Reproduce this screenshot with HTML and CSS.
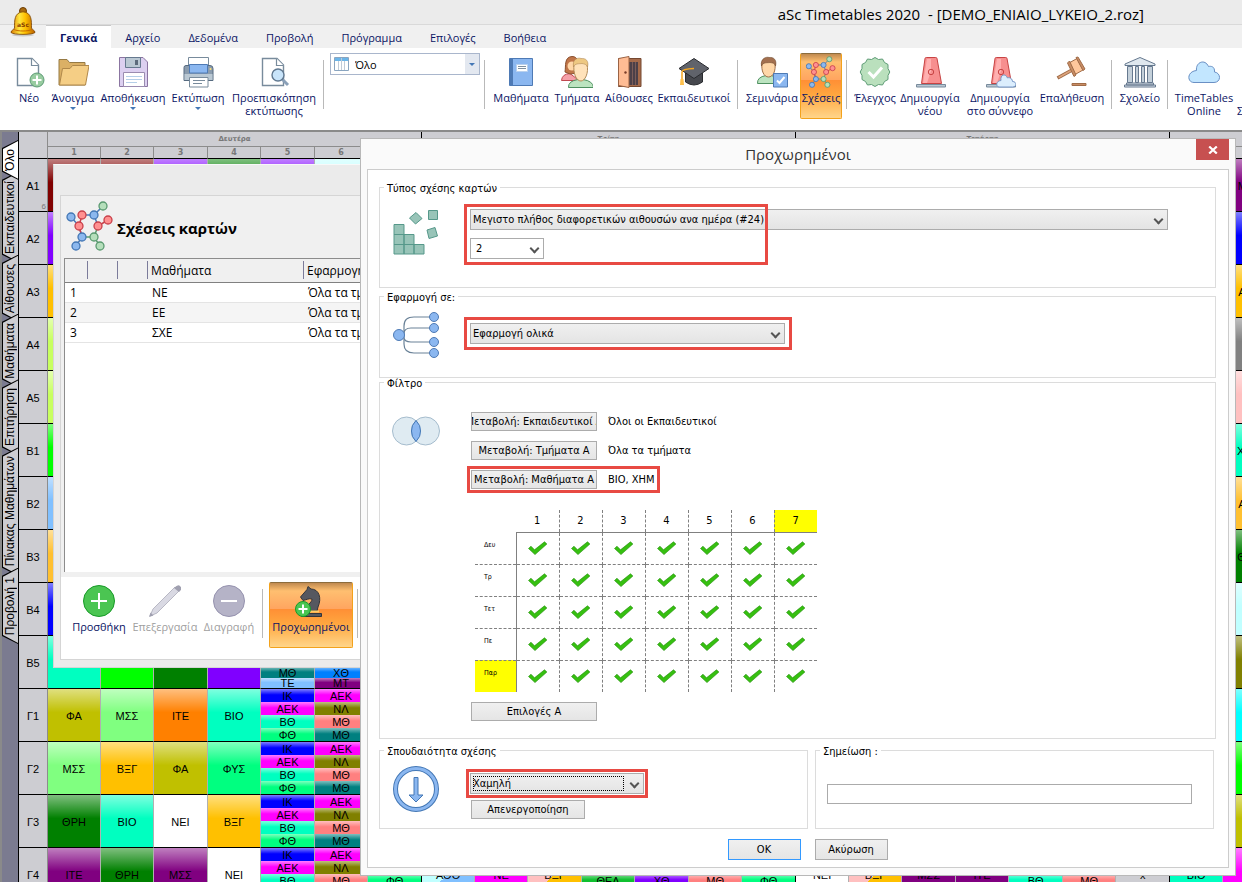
FILE: index.html
```html
<!DOCTYPE html>
<html lang="el">
<head>
    <meta charset="UTF-8">
    <meta name="viewport" content="width=device-width, initial-scale=1.0">
    <title>aSc Timetables 2020</title>
    <link rel="stylesheet" href="styles.css">
</head>
<body>

<!-- shared icons -->
<svg class="defs" width="0" height="0" aria-hidden="true">
    <symbol id="i-molecule" viewBox="0 0 48 50">
        <g fill="none" stroke-width="1.5">
            <path stroke="#4a7ab5" d="M28 14L37 5M16 14H28M5 16L13 25M16 36L10 45M13 25L16 36M28 14L32 25"/>
            <path stroke="#c8404a" d="M16 14L13 25L16 36M32 25L42 19"/>
            <path stroke="#5a9a70" d="M16 36H28L34 45M32 25L28 36"/>
        </g>
        <g fill="#8cb8ee" stroke="#4377b5" stroke-width="1.3"><circle cx="5" cy="16" r="4"/><circle cx="28" cy="14" r="4"/><circle cx="16" cy="36" r="4"/><circle cx="10" cy="45" r="4"/></g>
        <g fill="#ff9090" stroke="#c8404a" stroke-width="1.3"><circle cx="16" cy="14" r="4"/><circle cx="13" cy="25" r="4"/><circle cx="32" cy="25" r="4"/><circle cx="42" cy="19" r="4"/></g>
        <g fill="#b5dfbb" stroke="#5a9a70" stroke-width="1.3"><circle cx="37" cy="5" r="4"/><circle cx="28" cy="36" r="4"/><circle cx="34" cy="45" r="4"/></g>
    </symbol>
    <symbol id="i-page" viewBox="0 0 32 32">
        <path fill="#fff" stroke="#788b9c" stroke-width="1.4" d="M4.500 2.500H19L25.500 9V29.500H4.500Z"/>
        <path fill="#fff" stroke="#788b9c" stroke-width="1.200" d="M18.500 2.500V9.500H25.500"/>
    </symbol>
    <symbol id="i-siren" viewBox="0 0 32 32">
        <path fill="#f78f8f" stroke="#c74343" d="M7.500 27.500L11 2.500C11 1.500 12 1.500 13 1.500H21C22 1.500 23 1.500 23 2.500L27.500 27.500Z"/>
        <path fill="#ffb0b0" d="M13 3H17V15L13 27H9Z"/>
        <circle cx="17" cy="16" r="2.700" fill="none" stroke="#c74343"/>
        <path fill="#bac8d3" stroke="#788b9c" d="M2.500 28.500H31.500V31H2.500Z"/>
    </symbol>
    <symbol id="i-check" viewBox="0 0 20 14">
        <path fill="#36c010" stroke="#208a08" stroke-width=".6" d="M.5 7.500L3 5.200L6.500 8.800L16.500 .8L18.900 3L7 13.600Z"/>
    </symbol>
</svg>

<div class="app">
    <header class="titlebar">
        <svg class="logo" viewBox="0 0 26 30" aria-hidden="true">
            <defs>
                <linearGradient id="gold"><stop offset="0" stop-color="#d97a00"/><stop offset=".35" stop-color="#ffe640"/><stop offset=".6" stop-color="#ffc000"/><stop offset="1" stop-color="#b85c00"/></linearGradient>
            </defs>
            <ellipse cx="13" cy="28" rx="11" ry="1.500" fill="#c9c9c9"/>
            <circle cx="13" cy="4" r="3.500" fill="#a86a10" stroke="#6b3b00"/>
            <path fill="url(#gold)" stroke="#7a4300" stroke-width=".8" d="M4.500 21C4.500 14 4 5.500 13 4.800C22 5.500 21.500 14 21.500 21C22 23 25 23 25 25.500C23 28 3 28 1 25.500C1 23 4 23 4.500 21Z"/>
            <path fill="none" stroke="#c86b00" d="M4 22.500C8 24.500 18 24.500 22 22.500"/>
            <text x="13" y="20" text-anchor="middle" class="logo-text">aSc</text>
        </svg>
        <h1>aSc Timetables 2020 &nbsp;- [DEMO_ENIAIO_LYKEIO_2.roz]</h1>
    </header>

    <nav class="menu">
        <a href="#" class="active">Γενικά</a>
        <a href="#">Αρχείο</a>
        <a href="#">Δεδομένα</a>
        <a href="#">Προβολή</a>
        <a href="#">Πρόγραμμα</a>
        <a href="#">Επιλογές</a>
        <a href="#">Βοήθεια</a>
    </nav>

    <div class="ribbon">
        <div class="group group-file">
            <button class="tool">
                <svg viewBox="0 0 32 32"><use href="#i-page"/><circle cx="24" cy="24" r="7" fill="#98ccA0" stroke="#5e9c76"/><path stroke="#fff" stroke-width="2" d="M24 19.500V28.500M19.500 24H28.500"/></svg>
                <span>Νέο</span>
            </button>
            <button class="tool drop">
                <svg viewBox="0 0 32 32"><path fill="#dbb065" stroke="#967a44" d="M2 29V3.500H10L12.500 6.500H28V29Z"/><path fill="#f5ce85" stroke="#b0884a" d="M2.500 29L5.500 12.500H13L15.500 9.500H32L28.500 29Z"/></svg>
                <span>Άνοιγμα</span>
            </button>
            <button class="tool drop">
                <svg viewBox="0 0 32 32"><path fill="#dcd0f0" stroke="#8b75a1" d="M2.500 1.500H26L30.500 6V30.500H2.500Z"/><path fill="#bac8d3" stroke="#66798f" d="M8.500 1.500H23.500V11.500H8.500Z"/><path fill="#5c6b7b" d="M18 4H21V9H18Z"/><path fill="#fff" stroke="#9a8cb0" d="M6.500 16.500H27.500V30.500H6.500Z"/><path stroke="#b5cfe8" d="M9 20.500H25M9 23.500H25M9 26.500H20"/></svg>
                <span>Αποθήκευση</span>
            </button>
            <button class="tool drop">
                <svg viewBox="0 0 32 32"><path fill="#fff" stroke="#788b9c" d="M6.500 1.500H26.500V10H6.500Z"/><path fill="#8b9cae" stroke="#566b80" d="M2 11.500Q2 9.500 4 9.500H28Q31 9.500 31 12.500V24.500H2Z"/><path fill="#bac8d3" d="M2.500 18H30.500V24H2.500Z"/><path fill="#8bb7f0" stroke="#4e7ab5" d="M7.500 8.500H25.500V17H7.500Z"/><path fill="#fff" stroke="#788b9c" d="M7.500 21.500H26V31H7.500Z"/><path stroke="#788b9c" d="M11 24.500H23M11 27.500H20"/><circle cx="28.500" cy="13" r="1" fill="#ffe070"/></svg>
                <span>Εκτύπωση</span>
            </button>
            <button class="tool">
                <svg viewBox="0 0 32 32"><use href="#i-page"/><path stroke="#8aa0b8" stroke-width="3" d="M24 23L30 29"/><circle cx="20" cy="19" r="6" fill="#c8e4fa" stroke="#607890" stroke-width="1.400"/></svg>
                <span>Προεπισκόπηση<br>εκτύπωσης</span>
            </button>
        </div>
        <i class="sep"></i>
        <label class="view-combo">
            <svg viewBox="0 0 15 14" aria-hidden="true"><path fill="#fff" stroke="#8aa5c0" d="M.5.5H14.500V13.500H.5Z"/><path fill="#6bb5e8" d="M1 1H14V4H1Z"/><path stroke="#c0cbd8" d="M4.500 4V13M7.500 1V13M10.500 4V13"/></svg>
            <select aria-label="Προβολή"><option>Όλο</option></select>
        </label>
        <i class="sep near"></i>
        <div class="group group-data">
            <button class="tool">
                <svg viewBox="0 0 32 32"><path fill="#8bb7f0" stroke="#4e7ab5" d="M4.500 2.500H27.500V29.500H4.500Z"/><path fill="#4e7ab5" d="M5 3H8V29H5Z"/><path fill="#fff" stroke="#b8d0ee" d="M11.500 8.500H22.500V15.500H11.500Z"/><path stroke="#8090a0" d="M13 10.500H21M13 12.500H21"/></svg>
                <span>Μαθήματα</span>
            </button>
            <button class="tool">
                <svg viewBox="0 0 32 32"><path fill="#f5a0a8" stroke="#c04850" d="M.5 24.500Q1 18 9 17.500L18 24.500Z"/><path fill="#c07548" stroke="#8a5030" d="M4 16C5 10 3 1 11 .5C17 .5 18 6 17 17L9 18Z"/><circle cx="11" cy="10" r="4.500" fill="#ffd7a8"/><path fill="#bce4c0" stroke="#4e9060" d="M7.500 31.500Q7 25 17 23.500H22Q32 25 32.500 31.500Z"/><path fill="#ffe2ba" stroke="#b28a58" d="M13 8C13 3 25 2 26 8C28 17 24 25 20 25C15 25 12 17 13 8Z"/><path fill="#eec882" stroke="#b28a58" stroke-width=".6" d="M12.500 11C11 2 18 1.500 20 2.500C25 2 28 5 26.500 11C25.500 8 23 8 21 7.500C18 8 14 7 12.500 11Z"/></svg>
                <span>Τμήματα</span>
            </button>
            <button class="tool">
                <svg viewBox="0 0 32 32"><path fill="#a56a4a" stroke="#754830" d="M5.500 2.500H28V30.500H5.500Z"/><path fill="#4c4048" d="M16 6H25V29H16Z"/><path fill="#7a5c58" d="M19 6H20V29H19ZM22 6H23V29H22Z"/><path fill="#ffbc94" stroke="#9a6345" d="M5.500 2.500L16 .5V31.500L5.500 29.500Z"/><circle cx="12.500" cy="16.500" r="1.200" fill="#7a3c28"/></svg>
                <span>Αίθουσες</span>
            </button>
            <button class="tool">
                <svg viewBox="0 0 32 32"><path fill="#46484e" stroke="#2a2c30" d="M7.500 17V26Q16 32 24.500 26V17Z"/><path fill="#60636b" stroke="#2a2c30" d="M16 2.500L31 12.500L16 22.500L1 12.500Z"/><path fill="none" stroke="#f5a623" stroke-width="1.500" d="M16 12.500Q4 13 4 16V24"/><path fill="#ffc14d" d="M2.500 23H5.500L6 29H2Z"/></svg>
                <span>Εκπαιδευτικοί</span>
            </button>
        </div>
        <i class="sep"></i>
        <div class="group group-rel">
            <button class="tool">
                <svg viewBox="0 0 32 32"><path fill="#bce4c0" stroke="#4e9060" d="M1.500 27.500Q1 21 10 19.500H15Q24 21 24.500 27.500Z"/><path fill="#ffd7a8" stroke="#a07048" d="M6 7C6 3 18 3 19 7C20 15 17 21 12.500 21C8 21 5 15 6 7Z"/><path fill="#a3704f" stroke="#70492e" stroke-width=".6" d="M5.500 10C4 2 11 .5 13 1.500C18 1 21 4 19.500 10C18.500 6.500 16 7 14 6.500C11 7 7 6 5.500 10Z"/><path fill="#8bb7f0" stroke="#4e7ab5" d="M17.500 17.500H31.500V31H17.500Z"/><path fill="none" stroke="#fff" stroke-width="2" d="M21 24.500L23.500 27L28.500 21"/></svg>
                <span>Σεμινάρια</span>
            </button>
            <button class="tool selected">
                <svg viewBox="0 0 48 50"><use href="#i-molecule"/></svg>
                <span>Σχέσεις</span>
            </button>
        </div>
        <i class="sep near"></i>
        <div class="group group-check">
            <button class="tool">
                <svg viewBox="0 0 32 32"><path fill="#bae0bd" stroke="#5e9c76" d="M16 1.500L19.500 3.500L23.500 3L25.500 6.500L29 8.500L29 12.500L30.800 16L29 19.500V23.500L25.500 25.500L23.500 29L19.500 28.500L16 30.500L12.500 28.500L8.500 29L6.500 25.500L3 23.500V19.500L1.200 16L3 12.500V8.500L6.500 6.500L8.500 3L12.500 3.500Z"/><path fill="none" stroke="#fff" stroke-width="3" d="M9.500 16L14.500 21L23 11.500"/></svg>
                <span>Έλεγχος</span>
            </button>
            <button class="tool">
                <svg viewBox="0 0 32 32"><use href="#i-siren"/></svg>
                <span>Δημιουργία<br>νέου</span>
            </button>
            <button class="tool">
                <svg viewBox="0 0 32 32"><use href="#i-siren"/><path fill="#dceefd" stroke="#7898c8" d="M15 31H28.500C33 31 33 25.500 28.500 25.500C28 21 24 21.500 23.500 22C21 16.500 16 19 17 24.500C11.500 25 12 31 15 31Z"/></svg>
                <span>Δημιουργία<br>στο σύννεφο</span>
            </button>
            <button class="tool">
                <svg viewBox="0 0 32 32"><path stroke="#a06c48" stroke-width="3.600" d="M1.500 22L17 13.500"/><path stroke="#dda47c" stroke-width="1.600" d="M2.500 21.500L17 13.500"/><path fill="#ffc79c" stroke="#a06c48" d="M13 7L21 2.500L27 14L19 18.500Z"/><path fill="#c98c64" stroke="#a06c48" d="M11.500 7L13.500 5L20 19L18 20.500ZM20 1.500L22 1L29 13L27 14.500Z"/><path fill="#c98c64" stroke="#a06c48" d="M16 27.500H30V29.500H16Z"/></svg>
                <span>Επαλήθευση</span>
            </button>
        </div>
        <i class="sep"></i>
        <div class="group group-school">
            <button class="tool">
                <svg viewBox="0 0 32 32"><path fill="#dfe8ef" stroke="#66798f" d="M1 9.500V8L16 1.500L31 8V9.500Z"/><path fill="#c4d0da" stroke="#66798f" d="M3.500 10.500H8.500V26.500H3.500ZM11.500 10.500H14.500V26.500H11.500ZM17.500 10.500H20.500V26.500H17.500ZM23.500 10.500H28.500V26.500H23.500Z"/><path fill="#dfe8ef" stroke="#66798f" d="M2.500 27H29.500V29H2.500ZM.5 29H31.500V31H.5Z"/></svg>
                <span>Σχολείο</span>
            </button>
        </div>
        <i class="sep"></i>
        <div class="group group-online">
            <button class="tool">
                <svg viewBox="0 0 32 32"><path fill="#c2e6ff" stroke="#6a90c4" d="M6 26.500H26C33 26.500 33.500 17 26.500 16C27 10 22.500 10 20.500 10.500C17 2.500 7.500 6 8.500 14.500C-1.500 15.500-1 26.500 6 26.500Z"/></svg>
                <span>TimeTables<br>Online</span>
            </button>
            <button class="tool cut"><span><br>Σ</span></button>
        </div>
    </div>

    <main class="workspace">
        <div class="side-tabs">
            <button class="active"><span>Όλο</span></button>
            <button><span>Εκπαιδευτικοί</span></button>
            <button><span>Αίθουσες</span></button>
            <button><span>Μαθήματα</span></button>
            <button><span>Επιτήρηση</span></button>
            <button><span>Πίνακας Μαθημάτων</span></button>
            <button><span>Προβολή 1</span></button>
        </div>
        <div class="sheet">
            <table class="timetable" id="timetable"></table>
        </div>
    </main>

    <!-- card relations window -->
    <section class="window relations">
        <div class="relations-panel">
            <div class="relations-head">
                <svg viewBox="0 0 48 50"><use href="#i-molecule"/></svg>
                <h2>Σχέσεις καρτών</h2>
            </div>
            <div class="list">
                <table>
                    <colgroup><col class="c-num"><col class="c-flag"><col class="c-flag"><col class="c-subject"><col></colgroup>
                    <thead>
                        <tr><th></th><th></th><th></th><th>Μαθήματα</th><th>Εφαρμογή</th></tr>
                    </thead>
                    <tbody>
                        <tr><td>1</td><td></td><td></td><td>ΝΕ</td><td>Όλα τα τμήματα</td></tr>
                        <tr><td>2</td><td></td><td></td><td>ΕΕ</td><td>Όλα τα τμήματα</td></tr>
                        <tr><td>3</td><td></td><td></td><td>ΣΧΕ</td><td>Όλα τα τμήματα</td></tr>
                    </tbody>
                </table>
            </div>
            <div class="relations-tools">
                <div class="group group-edit">
                    <button class="tool">
                        <svg viewBox="0 0 32 32"><circle cx="16" cy="16" r="15.500" fill="#4bc552" stroke="#189a28"/><path stroke="#fff" stroke-width="2" d="M16 8V24M8 16H24"/></svg>
                        <span>Προσθήκη</span>
                    </button>
                    <button class="tool" disabled>
                        <svg viewBox="0 0 32 32"><path fill="#d9d9e3" stroke="#b8b8c4" d="M1 31L4 24L26 2L30 6L8 28Z"/><path fill="#a0a0b0" d="M0 32L1.500 27.500L4.500 30.500ZM25 3Q29-1 31 1Q34 4 30 7Z"/></svg>
                        <span>Επεξεργασία</span>
                    </button>
                    <button class="tool" disabled>
                        <svg viewBox="0 0 32 32"><circle cx="16" cy="16" r="15.500" fill="#b5b3c7" stroke="#9592ae"/><path stroke="#fff" stroke-width="2" d="M8 16H24"/></svg>
                        <span>Διαγραφή</span>
                    </button>
                </div>
                <i class="sep"></i>
                <button class="tool selected wide">
                    <svg viewBox="0 0 32 32"><path fill="#565860" stroke="#33353a" d="M10 26C11 20 17 18 17 14C14 13 11 15 8 15.500L5.500 12L12 4.500L13 1.500L16 4C24 4 27 13 23 22L22 26Z"/><path fill="#565860" stroke="#33353a" d="M6.500 28.500H26.500V31.500H6.500Z"/><path stroke="#ffcc66" stroke-width="2" d="M9 26.500H24"/><circle cx="8" cy="24" r="7.500" fill="#4bc552" stroke="#189a28"/><path stroke="#fff" stroke-width="2" d="M8 19.500V28.500M3.500 24H12.500"/></svg>
                    <span>Προχωρημένοι</span>
                </button>
                <i class="sep near"></i>
            </div>
        </div>
    </section>

    <!-- advanced dialog -->
    <section class="window dialog">
        <div class="dialog-title">
            <h2>Προχωρημένοι</h2>
            <button class="close" aria-label="Κλείσιμο"><svg viewBox="0 0 10 8"><path stroke="#fff" stroke-width="2.200" d="M1.200.5L8.800 7.500M8.800.5L1.200 7.500"/></svg></button>
        </div>
        <form class="dialog-body">
            <fieldset class="f-type">
                <legend>Τύπος σχέσης καρτών</legend>
                <svg class="icon" viewBox="0 0 46 46"><g fill="#98c4b8" stroke="#56988a"><path d="M1 15.500H11V45H1ZM11 25.500H21V45H11ZM21 35.500H31V45H21Z"/><path fill="none" d="M1 25.500H11M1 35.500H21"/><path d="M35.500 1.500H44.500V10.500H35.500ZM23 3.500L29 9.500L22.500 15L16.500 9ZM34 21L42 18.500L44.500 27L36 29.500Z"/></g></svg>
                <div class="controls">
                    <span class="select"><select aria-label="Τύπος σχέσης"><option>Μεγιστο πλήθος διαφορετικών αιθουσών ανα ημέρα (#24)</option></select></span>
                    <span class="select plain"><select aria-label="Πλήθος"><option>2</option></select></span>
                    <i class="mark mark-type"></i>
                </div>
            </fieldset>

            <fieldset class="f-apply">
                <legend>Εφαρμογή σε:</legend>
                <svg class="icon" viewBox="0 0 46 46"><g fill="none" stroke="#6a8298" stroke-width="1.200"><path d="M41 5H21Q11 5 11 14V32Q11 41 21 41H41M41 16H18Q11 16 11 22M41 30H18Q11 30 11 25"/></g><g fill="#8bb7f0" stroke="#4e7ab5"><circle cx="6" cy="23" r="5.500"/><circle cx="41" cy="5" r="4.500"/><circle cx="41" cy="16" r="4.500"/><circle cx="41" cy="30" r="4.500"/><circle cx="41" cy="41" r="4.500"/></g></svg>
                <div class="controls">
                    <span class="select medium"><select aria-label="Εφαρμογή σε"><option>Εφαρμογή ολικά</option></select></span>
                    <i class="mark mark-box"></i>
                </div>
            </fieldset>

            <fieldset class="f-filter">
                <legend>Φίλτρο</legend>
                <svg class="icon venn" viewBox="0 0 48 30"><circle cx="14.500" cy="15" r="14" fill="#dfebf2" stroke="#a5bccd"/><circle cx="33.500" cy="15" r="14" fill="#dfebf2" stroke="#a5bccd"/><path fill="#8bb7f0" stroke="#4377b5" d="M24 4.500Q29 9.500 28.500 15Q29 20.500 24 25.500Q19 20.500 19.500 15Q19 9.500 24 4.500Z"/></svg>
                <div class="controls">
                    <div class="pick"><button type="button" class="btn"><span>Μεταβολή: Εκπαιδευτικοί Α</span></button><span>Όλοι οι Εκπαιδευτικοί</span></div>
                    <div class="pick"><button type="button" class="btn"><span>Μεταβολή: Τμήματα Α</span></button><span>Όλα τα τμήματα</span></div>
                    <div class="pick"><button type="button" class="btn"><span>Μεταβολή: Μαθήματα Α</span></button><span>ΒΙΟ, ΧΗΜ</span><i class="mark mark-pick"></i></div>
                    <table class="periods" id="periods"></table>
                    <button type="button" class="btn"><span>Επιλογές Α</span></button>
                </div>
            </fieldset>

            <div class="pair">
                <fieldset class="f-weight">
                    <legend>Σπουδαιότητα σχέσης</legend>
                    <svg class="icon" viewBox="0 0 46 46"><circle cx="23" cy="23" r="20.500" fill="none" stroke="#4377b5" stroke-width="5"/><circle cx="23" cy="23" r="20.500" fill="none" stroke="#8bb7f0" stroke-width="3"/><path fill="#8bb7f0" stroke="#4377b5" d="M21 11.500H25V29H30L23 36L16 29H21Z"/></svg>
                    <div class="controls">
                        <span class="select small focused"><select aria-label="Σπουδαιότητα"><option>Χαμηλή</option></select></span>
                        <i class="mark mark-weight"></i>
                        <button type="button" class="btn off"><span>Απενεργοποίηση</span></button>
                    </div>
                </fieldset>
                <fieldset class="f-note">
                    <legend><label for="note">Σημείωση :</label></legend>
                    <input type="text" id="note">
                </fieldset>
            </div>

            <div class="actions">
                <button type="button" class="btn ok"><span>OK</span></button>
                <button type="button" class="btn"><span>Ακύρωση</span></button>
            </div>
        </form>
    </section>
</div>

<script src="script.js"></script>
</body>
</html>
```
FILE: styles.css
```css
* {
    box-sizing: border-box;
}

body {
    margin: 0;
    font-family: 'Open Sans', 'Noto Sans', sans-serif;
    font-size: 12px;
    color: #000;
    background: #c9c9cf;
}

button,
select,
input {
    font: inherit;
    color: inherit;
    margin: 0;
}

h1,
h2 {
    margin: 0;
    font-weight: normal;
}

.defs {
    position: absolute;
}

.app {
    position: relative;
    display: flex;
    flex-direction: column;
    height: 100vh;
    overflow: hidden;
}

/* title and menu */
.titlebar {
    position: relative;
    height: 25px;
    padding-right: 98px;
    background: #ebebeb;
    border-bottom: 1px solid #d9d9d9;
    text-align: right;
}

.titlebar h1 {
    font-size: 15px;
    line-height: 29px;
    height: 24px;
    white-space: nowrap;
}

.logo {
    position: absolute;
    left: 10px;
    top: 7px;
    width: 26px;
    height: 30px;
    z-index: 2;
}

.logo-text {
    font: bold 6px 'DejaVu Sans', sans-serif;
    fill: #8a3d00;
}

.menu {
    display: flex;
    height: 23px;
    padding-left: 46px;
    background: #f0f0f0;
    font-size: 11px;
}

.menu a {
    padding: 0 14px;
    line-height: 26px;
    height: 23px;
    color: #0a1464;
    text-decoration: none;
}

.menu a.active {
    background: #fff;
    border-top: 1px solid #c8c8c8;
    line-height: 24px;
    font-weight: bold;
}

/* ribbon */
.ribbon {
    display: flex;
    height: 82px;
    padding: 5px 0 0 12px;
    background: #fff;
    overflow: hidden;
}

.group {
    display: grid;
    flex: none;
    align-items: start;
}

.group-file { grid-template-columns: 34px 54px 66px 64px 88px; }
.group-data { grid-template-columns: 62px 50px 54px 76px; }
.group-rel { grid-template-columns: 56px 42px; }
.group-check { grid-template-columns: 46px 64px 76px 68px; }
.group-school { grid-template-columns: 44px; }
.group-online { grid-template-columns: 60px 20px; }
.group-edit { grid-template-columns: 66px 66px 62px; }

.tool {
    position: relative;
    display: flex;
    flex-direction: column;
    align-items: center;
    gap: 3px;
    height: 66px;
    padding: 3px 0 0;
    border: 0;
    background: none;
    color: #0a1464;
    font-size: 11px;
    line-height: 13px;
    white-space: nowrap;
}

.tool svg {
    flex: none;
    width: 32px;
    height: 32px;
}

.tool.drop::after {
    content: '';
    border: 3px solid transparent;
    border-top-color: #4377b5;
    border-bottom: 0;
}

.tool.cut {
    align-items: flex-start;
    padding: 38px 0 0 3px;
}

.tool:disabled {
    color: #a0a0a0;
}

.tool.selected {
    border: 1px solid #f3a21c;
    border-top-color: #8c6c3c;
    border-radius: 2px;
    padding-top: 2px;
    background: linear-gradient(#c08a50, #ffbf70 8px, #ffa560 40%, #ff8f35 41%, #ffa840 65%, #ffd58a);
}

.tool.wide {
    width: 84px;
}

.sep {
    flex: none;
    width: 1px;
    height: 49px;
    margin: 7px 6px 0 5px;
    background: #b9b9b9;
}

.sep.near {
    margin: 7px 5px 0 4px;
}

.view-combo {
    position: relative;
    display: flex;
    align-items: center;
    flex: none;
    width: 150px;
    height: 22px;
    border: 1px solid #a9b6cc;
    background: linear-gradient(to left, #e3e8f0 14px, #fff 14px);
    font-size: 11px;
}

.view-combo svg {
    position: absolute;
    left: 3px;
    width: 15px;
    height: 14px;
}

.view-combo select {
    flex: 1;
    height: 20px;
    padding: 0 24px;
    border: 0;
    background: none;
    appearance: none;
}

.view-combo::after {
    content: '';
    position: absolute;
    right: 4px;
    border: 3px solid transparent;
    border-top-color: #4377b5;
    border-bottom: 0;
}

/* timetable behind the windows */
.workspace {
    display: flex;
    flex: 1;
    min-height: 0;
    border-top: 2px solid #8a8a8a;
    border-left: 2px solid #8a8a8a;
    background: #7b7b90;
}

.side-tabs {
    display: flex;
    flex-direction: column;
    flex: none;
    width: 17px;
    padding-top: 8px;
    border-right: 1px solid #000;
    font: 12px 'Liberation Sans', sans-serif;
}

.side-tabs button {
    position: relative;
    flex: none;
    width: 16px;
    padding: 9px 0;
    margin-bottom: -8px;
    border: 0;
    background: #000;
    clip-path: polygon(0 8px, 100% 0, 100% 100%, 0 calc(100% - 8px));
    writing-mode: vertical-rl;
    line-height: 16px;
    white-space: nowrap;
}

.side-tabs button::before {
    content: '';
    position: absolute;
    inset: 1px 0 1px 1px;
    background: #cdcdd2;
    clip-path: polygon(0 8px, 100% 0, 100% 100%, 0 calc(100% - 8px));
}

.side-tabs button.active {
    z-index: 1;
}

.side-tabs button.active::before {
    background: #fff;
}

.side-tabs span {
    position: relative;
    display: block;
    transform: rotate(180deg);
}

.sheet {
    flex: 1;
    min-width: 0;
    overflow: hidden;
}

.timetable {
    width: 100%;
    table-layout: fixed;
    border-spacing: 0;
    font: 11px 'Liberation Sans', sans-serif;
    text-align: center;
}

.timetable th,
.timetable td {
    padding: 0;
    font-weight: normal;
    overflow: hidden;
}

.timetable .days th {
    height: 15px;
    border-bottom: 1px solid #8c8c8c;
    border-right: 1px solid #000;
    background: #cdcdd2;
    font: bold 7px/14px 'DejaVu Sans', sans-serif;
    color: #777;
}

.timetable .numbers th {
    height: 12px;
    border-bottom: 1px solid #000;
    border-right: 1px solid #8c8c8c;
    background: #cdcdd2;
    font: bold 8px/11px 'DejaVu Sans', sans-serif;
    color: #777;
}

.timetable tbody th {
    position: relative;
    height: 53px;
    padding-top: 2px;
    border-right: 1px solid #8c8c8c;
    border-bottom: 1px solid #000;
    background: #cdcdd2;
}

.timetable th.corner {
    border-right: 1px solid #8c8c8c;
    border-bottom: 1px solid #000;
    background: #cdcdd2;
}

.timetable small {
    position: absolute;
    right: 1px;
    bottom: 0;
    font-size: 8px;
    color: #777;
}

.timetable td {
    height: 53px;
    border-right: 1px solid #b0b0b0;
    border-bottom: 1px solid #000;
}

.timetable .day-end {
    border-right-color: #000;
}

.cards {
    display: flex;
    flex-direction: column;
    height: 52px;
}

.card {
    flex: 1 1 0;
    min-height: 0;
    display: flex;
    align-items: center;
    justify-content: center;
    overflow: hidden;
    padding-top: 1px;
    line-height: 10px;
    background-image: linear-gradient(rgba(255, 255, 255, .5), rgba(255, 255, 255, 0) 45%);
}

/* windows */
.window {
    position: absolute;
}

.relations {
    left: 53px;
    top: 164px;
    width: 740px;
    padding: 30px 6px 7px;
    background: #ebebeb;
    border: 1px solid #d5d5d5;
    border-top-color: #f8f8f8;
}

.relations-panel {
    border: 1px solid #d5d5d5;
    background: #f0f0f0;
}

.relations-head {
    display: flex;
    align-items: center;
    gap: 3px;
    height: 62px;
    padding: 0 0 2px 5px;
}

.relations-head svg {
    width: 48px;
    height: 50px;
}

.relations-head h2 {
    font-size: 15px;
    font-weight: bold;
    line-height: 24px;
    padding-top: 4px;
}

.list {
    height: 314px;
    margin-left: 3px;
    border: 1px solid #8c8c8c;
    border-bottom: 0;
    background: #fff;
}

.list table {
    width: 100%;
    table-layout: fixed;
    border-spacing: 0;
}

.c-num { width: 22px; }
.c-flag { width: 30px; }
.c-subject { width: 156px; }

.list th {
    position: relative;
    height: 24px;
    padding: 0 0 0 4px;
    background: #f0f0f0;
    border-bottom: 1px solid #808080;
    text-align: left;
    font-weight: normal;
}

.list th + th::before {
    content: '';
    position: absolute;
    left: 0;
    top: 2px;
    width: 1px;
    height: 18px;
    background: #7b7b9a;
}

.list td {
    height: 20px;
    padding: 0 0 0 5px;
    border-bottom: 1px solid #e4e4e4;
    line-height: 18px;
}

.list tr:nth-child(even) td {
    background: #f5f5f5;
}

.relations-tools {
    display: flex;
    height: 82px;
    margin-top: 5px;
    padding: 5px 0 0 5px;
    background: #fff;
}

.relations-tools .sep {
    margin-left: 2px;
}

.relations-tools .sep.near {
    margin-left: 4px;
}

/* dialog */
.dialog {
    left: 360px;
    right: 6px;
    top: 138px;
    padding: 0 6px 7px;
    border: 1px solid #b8b8b8;
    background: #fafafa;
    font: 11px 'DejaVu Sans Condensed', 'DejaVu Sans', sans-serif;
    font-stretch: condensed;
}

.dialog-title {
    position: relative;
    height: 30px;
    text-align: center;
}

.dialog-title h2 {
    font: 15px/31px 'Open Sans', sans-serif;
    color: #333;
}

.close {
    position: absolute;
    right: 0;
    top: 0;
    display: flex;
    align-items: center;
    justify-content: center;
    width: 33px;
    height: 21px;
    border: 0;
    background: #c75050;
}

.close svg {
    width: 10px;
    height: 8px;
}

.dialog-body {
    display: flex;
    flex-direction: column;
    padding: 13px 12px 7px 11px;
    border: 1px solid #ccc;
    background: #fff;
}

fieldset {
    display: grid;
    grid-template-columns: 46px 1fr;
    column-gap: 31px;
    align-items: start;
    min-width: 0;
    margin: 0;
    padding: 0 47px 0 13px;
    border: 1px solid #dcdcdc;
}

legend {
    height: 8px;
    margin-left: -9px;
    padding: 0 3px;
    line-height: 11px;
}

.f-type {
    min-height: 105px;
    padding-top: 18px;
    margin-bottom: 4px;
}

.f-apply {
    min-height: 86px;
    padding-top: 12px;
}

.f-filter {
    min-height: 361px;
    padding-top: 26px;
}

.f-weight {
    padding-top: 12px;
}

.f-note {
    display: block;
    padding: 30px 21px 0 11px;
}

.f-note legend {
    margin-left: -7px;
}

.pair {
    display: grid;
    grid-template-columns: 429fr 399fr;
    gap: 7px;
    min-height: 83px;
    margin: 7px 2px 0 0;
}

.icon {
    width: 46px;
    height: 46px;
}

.venn {
    width: 48px;
    height: 30px;
    margin: 4px 0 0 -1px;
}

.controls {
    position: relative;
    display: flex;
    flex-direction: column;
    align-items: flex-start;
}

.f-type .controls {
    gap: 8px;
}

.f-apply .controls {
    margin-top: 11px;
}

.f-weight .controls {
    margin-top: 7px;
}

.select {
    position: relative;
    width: 100%;
    height: 21px;
}

.select select {
    width: 100%;
    height: 21px;
    padding: 0 20px 0 2px;
    border: 1px solid #acacac;
    border-radius: 0;
    background: linear-gradient(#f0f0f0, #e4e4e4);
    appearance: none;
}

.select::after {
    content: '';
    position: absolute;
    right: 6px;
    top: 7px;
    width: 5px;
    height: 5px;
    border: solid #555;
    border-width: 0 2px 2px 0;
    transform: rotate(45deg);
}

.select.plain { width: 74px; }
.select.medium { width: 315px; }
.select.small { width: 174px; }

.select.plain select {
    padding-left: 5px;
    background: #fff;
}

.select.focused::before {
    content: '';
    position: absolute;
    left: 3px;
    top: 3px;
    right: 20px;
    bottom: 3px;
    border: 1px dotted #000;
    pointer-events: none;
}

.mark {
    position: absolute;
    border: 3px solid #e84a43;
    pointer-events: none;
}

.mark-type {
    left: -6px;
    top: -5px;
    width: 304px;
    height: 61px;
}

.mark-box {
    left: -6px;
    top: -6px;
    width: 328px;
    height: 33px;
}

.mark-pick {
    left: -4px;
    top: -4px;
    width: 193px;
    height: 27px;
}

.mark-weight {
    left: -4px;
    top: -4px;
    width: 182px;
    height: 29px;
}

.btn {
    display: flex;
    align-items: center;
    justify-content: center;
    flex: none;
    width: 126px;
    height: 19px;
    padding: 0;
    border: 1px solid #acacac;
    background: linear-gradient(#f0f0f0, #e5e5e5);
    overflow: hidden;
    white-space: nowrap;
}

.f-filter .controls {
    padding-left: 1px;
}

.pick {
    position: relative;
    display: flex;
    align-items: center;
    gap: 11px;
    margin-bottom: 10px;
}

.btn.off {
    width: 114px;
    margin: 6px 0 0 1px;
}

.periods {
    margin: 11px 0 10px 4px;
    border-collapse: collapse;
    table-layout: fixed;
    width: 342px;
}

.periods th,
.periods td {
    padding: 0;
    height: 32px;
    border: 1px dashed #808080;
    border-bottom-width: 0;
    border-right-width: 0;
    text-align: center;
    font-weight: normal;
}

.periods thead th {
    height: 22px;
    border-top: 0;
}

.periods th:first-child {
    width: 41px;
    border-left: 0;
    font-size: 7px;
    line-height: 10px;
    text-align: left;
    padding: 0 0 6px 9px;
}

.periods thead th:nth-child(2) {
    border-left: 0;
}

.periods td:nth-child(2) {
    border-left: 1px solid #808080;
}

.periods tbody tr:first-child td {
    border-top: 1px solid #808080;
}

.periods tbody tr:first-child th {
    border-top: 0;
}

.periods .hot {
    background: #ff0;
    background-clip: padding-box;
}

.periods svg {
    display: block;
    width: 20px;
    height: 14px;
    margin: 0 auto;
}

#note {
    display: block;
    width: 100%;
    height: 20px;
    border: 1px solid #ababab;
    background: #fff;
}

.actions {
    display: flex;
    justify-content: center;
    gap: 14px;
    margin-top: 10px;
    padding-left: 20px;
}

.actions .btn {
    width: 73px;
    height: 21px;
}

.actions .ok {
    border-color: #3399ff;
}
```
FILE: script.js
```js
// Column widths of one day (7 periods)
const periodWidths = [53, 53, 54, 53, 54, 53, 54];
const days = ['Δευτέρα', 'Τρίτη', 'Τετάρτη', 'Πέμπτη'];
const columnCount = days.length * 7;

// Lessons that are split in groups
const split5 = [['ΙΚ', '#0000ff'], ['ΑΕΚ', '#ff00ff'], ['ΒΘ', '#00ffc0'], ['ΦΘ', '#00ff80']];
const split6 = [['ΑΕΚ', '#ff00ff'], ['ΝΛ', '#808000'], ['ΜΘ', '#ff8080'], ['ΜΘ', '#008080']];

function splitWith(name, color) {
    return [['', color], ['', color], [name, color], ['', color]];
}

// cells: column number -> list of [lesson, color]
const classes = [
    {name: 'Α1', note: '6', cells: {1: [['', '#800000']], 2: [['', '#800000']], 3: [['', '#8000ff']], 4: [['', '#008000']], 5: [['', '#8000ff']], 6: [['', '#c0ffff']], 23: [['ΜΣΣ', '#800080']]}},
    {name: 'Α2', cells: {1: [['', '#8000ff']], 23: [['ΙΚ', '#0000ff']]}},
    {name: 'Α3', cells: {1: [['', '#ffc000']], 23: [['ΑΕΚ', '#ffc000']]}},
    {name: 'Α4', cells: {1: [['', '#c8ff60']], 23: [['ΑΓ', '#808080']]}},
    {name: 'Α5', cells: {1: [['', '#c8ff60']], 23: [['', '#ffc0c0']]}},
    {name: 'Β1', cells: {1: [['', '#00ff00']], 23: [['ΧΗΜ', '#00ffc0']]}},
    {name: 'Β2', cells: {1: [['', '#80c0ff']], 23: [['ΑΕΚ', '#ffc030']]}},
    {name: 'Β3', cells: {1: [['', '#ffc030']], 23: [['ΘΡΗ', '#008000']]}},
    {name: 'Β4', cells: {1: [['', '#0000ff']], 23: [['ΑΓ', '#c0ffff']]}},
    {name: 'Β5', cells: {
        1: [['', '#00ffc0']], 2: [['', '#00ff00']], 3: [['', '#008000']], 4: [['', '#8000ff']],
        5: [['', '#ff00ff'], ['', '#808000'], ['', '#ff8080'], ['ΜΘ', '#008080'], ['ΤΕ', '#80c0ff']],
        6: [['', '#ff00ff'], ['', '#808000'], ['', '#ff8080'], ['ΧΘ', '#0080ff'], ['ΜΤ', '#800080']],
        23: [['', '#808000']]
    }},
    {name: 'Γ1', cells: {1: [['ΦΑ', '#c0c000']], 2: [['ΜΣΣ', '#80ff80']], 3: [['ΙΤΕ', '#ff8000']], 4: [['ΒΙΟ', '#00ffc0']], 5: split5, 6: split6, 23: [['', '#00ffff']]}},
    {name: 'Γ2', cells: {1: [['ΜΣΣ', '#80ff80']], 2: [['ΒΞΓ', '#ffc000']], 3: [['ΦΑ', '#c0c000']], 4: [['ΦΥΣ', '#00ff80']], 5: split5, 6: split6, 23: [['', '#00ff00']]}},
    {name: 'Γ3', cells: {1: [['ΘΡΗ', '#008000']], 2: [['ΒΙΟ', '#00ffc0']], 3: [['ΝΕΙ', '#ffffff']], 4: [['ΒΞΓ', '#ffc000']], 5: split5, 6: split6, 23: [['', '#c0c000']]}},
    {name: 'Γ4', cells: {
        1: [['ΙΤΕ', '#800080']], 2: [['ΘΡΗ', '#008000']], 3: [['ΜΣΣ', '#800080']], 4: [['ΝΕΙ', '#ffffff']], 5: split5, 6: split6,
        7: splitWith('ΦΘ', '#00ff80'), 8: [['ΑΘΘ', '#c0ffff', '#80c0ff']], 9: [['ΝΕ', '#ff00ff']], 10: [['ΒΞΓ', '#ffc0c0', '#ffc000']],
        11: splitWith('ΘΕΛ', '#10c030'), 12: splitWith('ΧΘ', '#8000ff'), 13: splitWith('ΜΘ', '#ff8080'), 14: splitWith('ΦΘ', '#00ff80'),
        15: [['ΝΕΙ', '#ffffff']], 16: [['ΒΞΓ', '#ffc0c0', '#ffc000']], 17: [['ΜΣΣ', '#800080']], 18: [['ΙΤΕ', '#800080']],
        19: splitWith('ΒΘ', '#00ffc0'), 20: splitWith('ΜΘ', '#ff8080'), 21: [['x', '#cdcdd2']], 22: [['ΒΙΟ', '#00ffc0']], 23: [['', '#ff00ff']]
    }}
];

function card([name, color, second]) {
    const fill = second
        ? `background-image: linear-gradient(135deg, ${color} 50%, ${second} 50%)`
        : `background-color: ${color}`;
    return `<div class="card" style="${fill}">${name}</div>`;
}

function drawTimetable() {
    let cols = '<col style="width: 29px">';
    let numbers = '';
    for (let i = 0; i < columnCount; i++) {
        cols += `<col style="width: ${periodWidths[i % 7]}px">`;
        numbers += `<th>${i % 7 + 1}</th>`;
    }

    const head = days.map(day => `<th colspan="7">${day}</th>`).join('');

    let body = '';
    for (const row of classes) {
        body += `<tr><th>${row.name}${row.note ? `<small>${row.note}</small>` : ''}</th>`;
        for (let i = 1; i <= columnCount; i++) {
            const cards = row.cells[i] || [['', '#ffffff']];
            body += `<td class="${i % 7 === 0 ? 'day-end' : ''}"><div class="cards">${cards.map(card).join('')}</div></td>`;
        }
        body += '</tr>';
    }

    document.getElementById('timetable').innerHTML =
        `<colgroup>${cols}</colgroup><thead><tr class="days"><th class="corner" rowspan="2"></th>${head}</tr><tr class="numbers">${numbers}</tr></thead><tbody>${body}</tbody>`;
}

function drawPeriods() {
    const check = '<svg viewBox="0 0 20 14"><use href="#i-check"/></svg>';
    let html = '<thead><tr><th></th>';
    for (let i = 1; i <= 7; i++) {
        html += `<th class="${i === 7 ? 'hot' : ''}">${i}</th>`;
    }
    html += '</tr></thead><tbody>';
    ['Δευ', 'Τρ', 'Τετ', 'Πε', 'Παρ'].forEach((day, i) => {
        html += `<tr><th class="${i === 4 ? 'hot' : ''}">${day}</th>${`<td>${check}</td>`.repeat(7)}</tr>`;
    });
    document.getElementById('periods').innerHTML = html + '</tbody>';
}

drawTimetable();
drawPeriods();
```
